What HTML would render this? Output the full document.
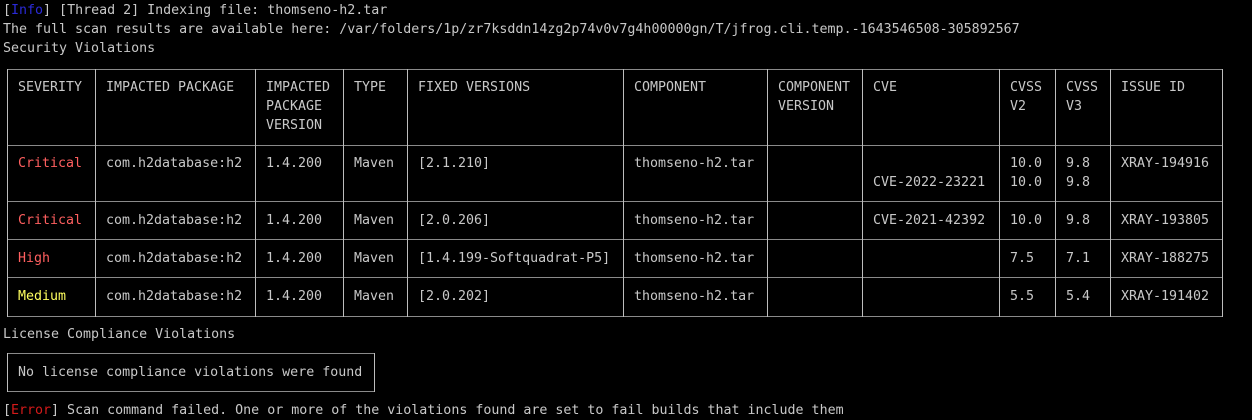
<!DOCTYPE html>
<html><head><meta charset="utf-8"><style>
html,body{margin:0;padding:0;background:#000;width:1252px;height:420px;overflow:hidden;position:relative}
.t{position:absolute;margin-top:1px;font-family:"DejaVu Sans Mono","Liberation Mono",monospace;font-size:13.3px;line-height:19px;color:#c8c8c8;white-space:pre}
.h{position:absolute;height:1px;background:#8a8a8a}
.v{position:absolute;width:1px;background:#bdbdbd}
.r{color:#ff5f5f}.y{color:#ffff5f}.b{color:#2a2ad8}.e{color:#d41a1a}
</style></head><body>
<div class="t" style="left:3px;top:0px">[<span class="b">Info</span>] [Thread 2] Indexing file: thomseno-h2.tar</div>
<div class="t" style="left:3px;top:19px">The full scan results are available here: /var/folders/1p/zr7ksddn14zg2p74v0v7g4h00000gn/T/jfrog.cli.temp.-1643546508-305892567</div>
<div class="t" style="left:3px;top:38px">Security Violations</div>

<div class="h" style="left:7px;width:1216px;top:69px"></div>
<div class="h" style="left:7px;width:1216px;top:145px"></div>
<div class="h" style="left:7px;width:1216px;top:201px"></div>
<div class="h" style="left:7px;width:1216px;top:239px"></div>
<div class="h" style="left:7px;width:1216px;top:277px"></div>
<div class="h" style="left:7px;width:1216px;top:316px"></div>
<div class="v" style="left:7px;top:69px;height:248px"></div>
<div class="v" style="left:95px;top:69px;height:248px"></div>
<div class="v" style="left:255px;top:69px;height:248px"></div>
<div class="v" style="left:343px;top:69px;height:248px"></div>
<div class="v" style="left:407px;top:69px;height:248px"></div>
<div class="v" style="left:623px;top:69px;height:248px"></div>
<div class="v" style="left:767px;top:69px;height:248px"></div>
<div class="v" style="left:862px;top:69px;height:248px"></div>
<div class="v" style="left:999px;top:69px;height:248px"></div>
<div class="v" style="left:1055px;top:69px;height:248px"></div>
<div class="v" style="left:1110px;top:69px;height:248px"></div>
<div class="v" style="left:1222px;top:69px;height:248px"></div>

<div class="t" style="left:18px;top:77px">SEVERITY</div>
<div class="t" style="left:106px;top:77px">IMPACTED PACKAGE</div>
<div class="t" style="left:266px;top:77px">IMPACTED
PACKAGE
VERSION</div>
<div class="t" style="left:354px;top:77px">TYPE</div>
<div class="t" style="left:418px;top:77px">FIXED VERSIONS</div>
<div class="t" style="left:634px;top:77px">COMPONENT</div>
<div class="t" style="left:778px;top:77px">COMPONENT
VERSION</div>
<div class="t" style="left:873px;top:77px">CVE</div>
<div class="t" style="left:1010px;top:77px">CVSS
V2</div>
<div class="t" style="left:1066px;top:77px">CVSS
V3</div>
<div class="t" style="left:1121px;top:77px">ISSUE ID</div>

<div class="t r" style="left:18px;top:153px">Critical</div>
<div class="t" style="left:106px;top:153px">com.h2database:h2</div>
<div class="t" style="left:266px;top:153px">1.4.200</div>
<div class="t" style="left:354px;top:153px">Maven</div>
<div class="t" style="left:418px;top:153px">[2.1.210]</div>
<div class="t" style="left:634px;top:153px">thomseno-h2.tar</div>
<div class="t" style="left:873px;top:172px">CVE-2022-23221</div>
<div class="t" style="left:1010px;top:153px">10.0
10.0</div>
<div class="t" style="left:1066px;top:153px">9.8
9.8</div>
<div class="t" style="left:1121px;top:153px">XRAY-194916</div>

<div class="t r" style="left:18px;top:210px">Critical</div>
<div class="t" style="left:106px;top:210px">com.h2database:h2</div>
<div class="t" style="left:266px;top:210px">1.4.200</div>
<div class="t" style="left:354px;top:210px">Maven</div>
<div class="t" style="left:418px;top:210px">[2.0.206]</div>
<div class="t" style="left:634px;top:210px">thomseno-h2.tar</div>
<div class="t" style="left:873px;top:210px">CVE-2021-42392</div>
<div class="t" style="left:1010px;top:210px">10.0</div>
<div class="t" style="left:1066px;top:210px">9.8</div>
<div class="t" style="left:1121px;top:210px">XRAY-193805</div>

<div class="t r" style="left:18px;top:248px">High</div>
<div class="t" style="left:106px;top:248px">com.h2database:h2</div>
<div class="t" style="left:266px;top:248px">1.4.200</div>
<div class="t" style="left:354px;top:248px">Maven</div>
<div class="t" style="left:418px;top:248px">[1.4.199-Softquadrat-P5]</div>
<div class="t" style="left:634px;top:248px">thomseno-h2.tar</div>
<div class="t" style="left:1010px;top:248px">7.5</div>
<div class="t" style="left:1066px;top:248px">7.1</div>
<div class="t" style="left:1121px;top:248px">XRAY-188275</div>

<div class="t y" style="left:18px;top:286px">Medium</div>
<div class="t" style="left:106px;top:286px">com.h2database:h2</div>
<div class="t" style="left:266px;top:286px">1.4.200</div>
<div class="t" style="left:354px;top:286px">Maven</div>
<div class="t" style="left:418px;top:286px">[2.0.202]</div>
<div class="t" style="left:634px;top:286px">thomseno-h2.tar</div>
<div class="t" style="left:1010px;top:286px">5.5</div>
<div class="t" style="left:1066px;top:286px">5.4</div>
<div class="t" style="left:1121px;top:286px">XRAY-191402</div>

<div class="t" style="left:3px;top:324px">License Compliance Violations</div>
<div class="h" style="left:7px;width:368px;top:353px"></div>
<div class="h" style="left:7px;width:368px;top:391px"></div>
<div class="v" style="left:7px;top:353px;height:39px"></div>
<div class="v" style="left:374px;top:353px;height:39px"></div>
<div class="t" style="left:18px;top:362px">No license compliance violations were found</div>
<div class="t" style="left:3px;top:400px">[<span class="e">Error</span>] Scan command failed. One or more of the violations found are set to fail builds that include them</div>
</body></html>
